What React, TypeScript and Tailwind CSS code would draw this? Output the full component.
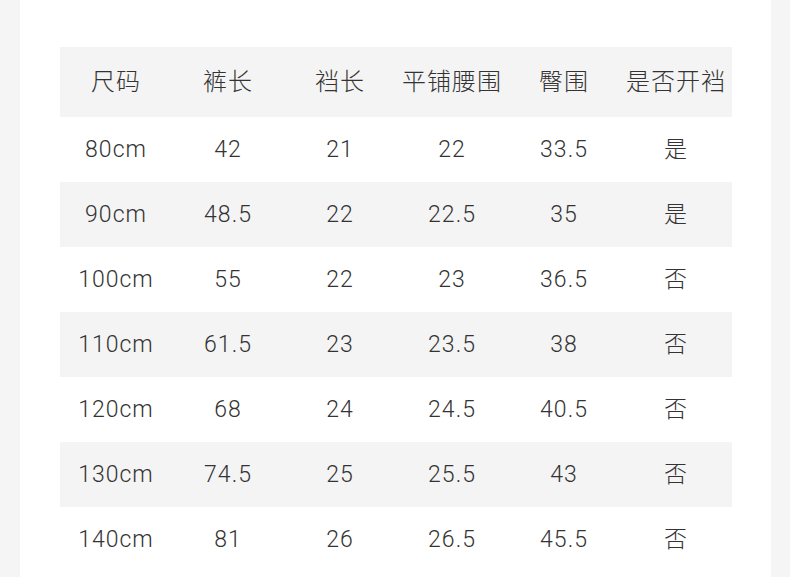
import React from "react";

const header = ["尺码", "裤长", "裆长", "平铺腰围", "臀围", "是否开裆"];
const rows = [
  ["80cm", "42", "21", "22", "33.5", "是"],
  ["90cm", "48.5", "22", "22.5", "35", "是"],
  ["100cm", "55", "22", "23", "36.5", "否"],
  ["110cm", "61.5", "23", "23.5", "38", "否"],
  ["120cm", "68", "24", "24.5", "40.5", "否"],
  ["130cm", "74.5", "25", "25.5", "43", "否"],
  ["140cm", "81", "26", "26.5", "45.5", "否"],
];

export default function App() {
  return (
    <div className="w-[790px] h-[577px] overflow-hidden bg-[#f5f5f5] flex">
      <div className="ml-[20px] w-[751px] h-full bg-white pt-[47px] pl-[40px]">
        <div className="w-[672px] text-[#333333]">
          <div
            className="grid grid-cols-6 h-[70px] bg-[#f4f4f4] items-center pb-[5px]"
            style={{ fontFamily: '"Noto Sans CJK SC", sans-serif' }}
          >
            {header.map((h) => (
              <div key={h} className="text-center text-[24px] tracking-[1px] font-light leading-none">
                {h}
              </div>
            ))}
          </div>
          {rows.map((r, i) => (
            <div
              key={i}
              className={`grid grid-cols-6 h-[65px] items-center ${i % 2 === 1 ? "bg-[#f4f4f4]" : "bg-white"}`}
              style={{ fontFamily: 'Roboto, "Noto Sans CJK SC", sans-serif' }}
            >
              {r.map((c, j) => (
                <div
                  key={j}
                  className="text-center text-[23px] font-light leading-none tracking-[1px] text-[#333333]"
                >
                  {c}
                </div>
              ))}
            </div>
          ))}
        </div>
      </div>
    </div>
  );
}
